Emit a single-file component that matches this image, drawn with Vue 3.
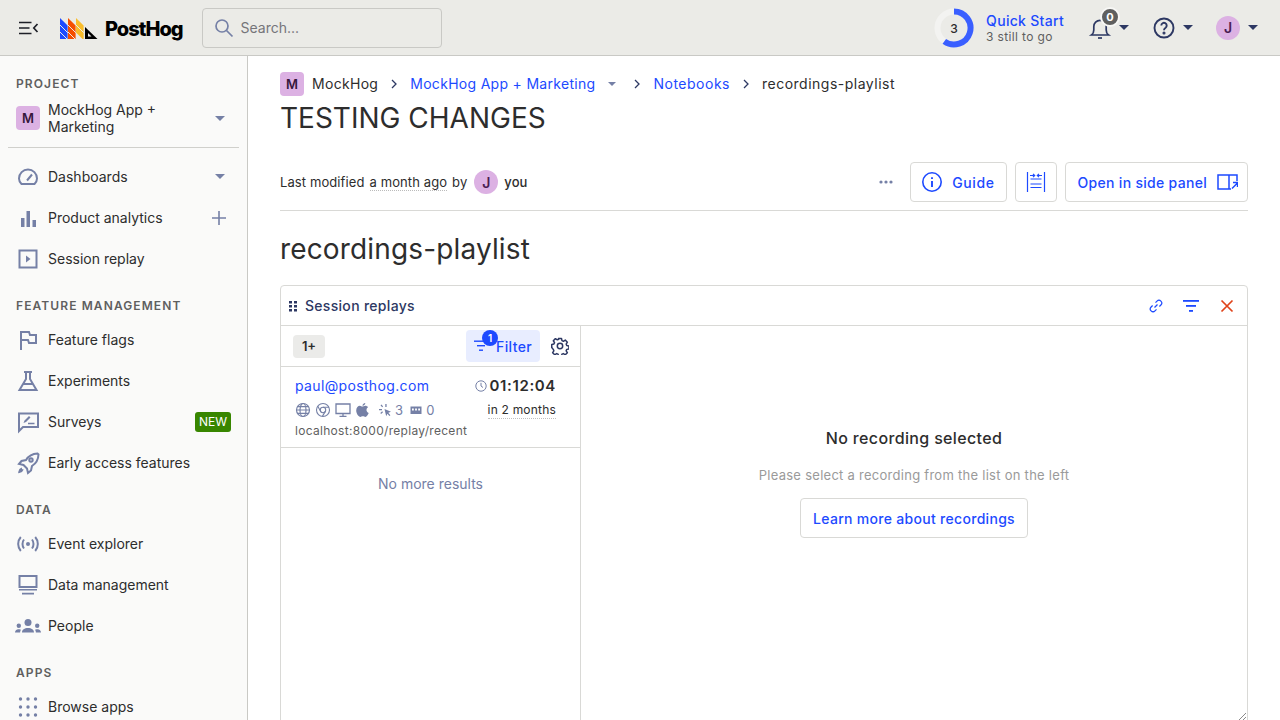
<template>
  <div class="app">
    <header class="topbar">
      <div class="top-left">
        <button class="menu-btn" aria-label="Menu">
          <svg width="20" height="14" viewBox="0 0 20 14" fill="none" stroke="#1d1f27" stroke-width="1.7">
            <path d="M0 1.5h12.5M0 7h10.5M0 12.5h12.5M18.5 3L14.8 7l3.7 4" />
          </svg>
        </button>
        <div class="logo">
          <svg width="38" height="22" viewBox="0 0 38 22">
            <path d="M0 0l7.6 7.6V21H0z" fill="#1d4aff" />
            <path d="M8 0l7.600 7.600V21H8z" fill="#f54e00" />
            <path d="M16 0l7.600 7.600V21h-1L16 14.500z" fill="#f9bd2b" />
            <path d="M25 9l12.500 12H25z" fill="#000" />
            <path d="M28 18.500h3.500L28 15z" fill="#ebebe7" />
            <path d="M0 7l7.800 7.800M0 14l7.200 7.200M8 7l7.800 7.800M8 14l7.200 7.200M16 7l7.800 7.800" stroke="#ebebe7" stroke-width="1" />
          </svg>
          <span class="logo-text">PostHog</span>
        </div>
        <div class="search">
          <svg width="20" height="20" viewBox="0 0 20 20" fill="none" stroke="#7580a6" stroke-width="1.7">
            <circle cx="8" cy="8" r="6" />
            <path d="M12.5 12.5L18.5 18.5" />
          </svg>
          <span>Search...</span>
        </div>
      </div>
      <div class="top-right">
        <div class="quick-start">
          <svg width="40" height="40" viewBox="0 0 40 40" fill="none">
            <circle cx="20" cy="20" r="16.5" stroke="#f3f3f1" stroke-width="6" />
            <path d="M20 3.5A16.5 16.5 0 1 1 10.3 33.35" stroke="#3a5fff" stroke-width="6" />
            <text x="20" y="24.5" text-anchor="middle" class="ring-num">3</text>
          </svg>
          <div class="qs-text">
            <div class="qs-title">Quick Start</div>
            <div class="qs-sub">3 still to go</div>
          </div>
        </div>
        <div class="top-action bell">
          <svg width="24" height="24" viewBox="0 0 24 24" fill="none" stroke="#2d3863" stroke-width="1.7">
            <path d="M3.500 19c1.400-1 2.300-2.600 2.300-5V10.500a6.200 6.200 0 0 1 12.400 0v3.500c0 2.400.9 4 2.300 5z" />
            <path d="M10 22h4" />
          </svg>
          <span class="bell-badge">0</span>
          <span class="caret dark"></span>
        </div>
        <div class="top-action help">
          <svg width="24" height="24" viewBox="0 0 24 24" fill="none" stroke="#2d3863" stroke-width="1.9">
            <circle cx="12" cy="12" r="9.500" />
            <path d="M9.300 9.500a2.700 2.700 0 1 1 4.300 2.200c-1 .7-1.600 1.200-1.600 2.500" />
            <circle cx="12" cy="17" r="0.600" fill="#2d3863" />
          </svg>
          <span class="caret dark"></span>
        </div>
        <div class="top-action user">
          <span class="avatar round">J</span>
          <span class="caret dark"></span>
        </div>
      </div>
    </header>

    <div class="body">
      <aside class="sidebar">
        <div class="section-label first">PROJECT</div>
        <div class="project-row">
          <span class="avatar">M</span>
          <span class="project-name">MockHog App + Marketing</span>
          <span class="caret"></span>
        </div>
        <div class="side-divider"></div>

        <template v-for="group in navGroups" :key="group.label">
          <div v-if="group.label" class="section-label">{{ group.label }}</div>
          <div v-for="item in group.items" :key="item.name" class="nav-item">
            <svg class="nav-icon" width="24" height="24" viewBox="0 0 24 24" v-html="item.icon"></svg>
            <span class="nav-name">{{ item.name }}</span>
            <span v-if="item.side === 'caret'" class="caret"></span>
            <svg v-if="item.side === 'plus'" width="16" height="16" viewBox="0 0 16 16" class="plus" stroke="#7580a6" stroke-width="1.6">
              <path d="M8 1v14M1 8h14" />
            </svg>
            <span v-if="item.side === 'new'" class="new-tag">NEW</span>
          </div>
        </template>
      </aside>

      <main class="main">
        <nav class="crumbs">
          <span class="avatar">M</span>
          <span class="crumb-text wide-a">MockHog</span>
          <svg class="chev" width="8" height="10" viewBox="0 0 8 10" fill="none" stroke="#2d3863" stroke-width="1.300"><path d="M2 1l4 4-4 4" /></svg>
          <a class="link crumb-text wide-b">MockHog App + Marketing</a>
          <span class="caret small"></span>
          <svg class="chev" width="8" height="10" viewBox="0 0 8 10" fill="none" stroke="#2d3863" stroke-width="1.300"><path d="M2 1l4 4-4 4" /></svg>
          <a class="link crumb-text wide-c">Notebooks</a>
          <svg class="chev" width="8" height="10" viewBox="0 0 8 10" fill="none" stroke="#2d3863" stroke-width="1.300"><path d="M2 1l4 4-4 4" /></svg>
          <span class="crumb-text wide-c">recordings-playlist</span>
        </nav>
        <h1 class="page-title">TESTING CHANGES</h1>

        <div class="meta-row">
          <div class="modified">
            Last modified <span class="dotted">a month ago</span> by
            <span class="avatar round">J</span>
            <span class="you">you</span>
          </div>
          <div class="actions">
            <span class="more">
              <svg width="14" height="4" viewBox="0 0 14 4" fill="#7580a6">
                <circle cx="2" cy="2" r="1.600" /><circle cx="7" cy="2" r="1.600" /><circle cx="12" cy="2" r="1.600" />
              </svg>
            </span>
            <button class="btn guide">
              <svg width="22" height="22" viewBox="0 0 22 22" fill="none" stroke="#1d4aff" stroke-width="1.600">
                <circle cx="11" cy="11" r="9.200" />
                <path d="M11 10v6" stroke-width="1.900" /><path d="M11 6.300v1.800" stroke-width="1.900" />
              </svg>
              Guide
            </button>
            <button class="btn icon-only">
              <svg width="20" height="22" viewBox="0 0 20 22" fill="none" stroke="#1d4aff" stroke-width="1.200">
                <path d="M1.500 1v20M18.500 1v20M4.500 8h11M4.500 13h11M4.500 16.500h11M4 4.500h4.500M11.500 4.500H16M7 2.800l1.700 1.700L7 6.200M13 2.800l-1.700 1.700L13 6.200" />
              </svg>
            </button>
            <button class="btn side">
              Open in side panel
              <svg width="21" height="16" viewBox="0 0 21 16" fill="none" stroke="#1d4aff" stroke-width="1.500">
                <path d="M20 7V1H1v14h13M12 1v14" />
                <path d="M15 14.500l5-5M16 8.500h4.500V13" stroke-width="1.500" />
              </svg>
            </button>
          </div>
        </div>

        <h2 class="doc-title">recordings-playlist</h2>

        <section class="card">
          <div class="card-head">
            <svg class="grip" width="8" height="12" viewBox="0 0 8 12" fill="#2d3863">
              <rect x="0" y="1" width="3" height="2.500" /><rect x="5" y="1" width="3" height="2.500" />
              <rect x="0" y="5" width="3" height="2.500" /><rect x="5" y="5" width="3" height="2.500" />
              <rect x="0" y="9" width="3" height="2.500" /><rect x="5" y="9" width="3" height="2.500" />
            </svg>
            <span class="card-title">Session replays</span>
            <div class="card-tools">
              <svg width="14" height="14" viewBox="0 0 14 14" fill="none" stroke="#1d4aff" stroke-width="1.200">
                <path d="M5.500 8.500l3-3" />
                <path d="M6.500 3.600l1.500-1.500a2.500 2.500 0 0 1 3.900 3.900l-1.500 1.500" />
                <path d="M7.500 10.400L6 11.900a2.500 2.500 0 0 1-3.900-3.900l1.500-1.500" />
              </svg>
              <svg width="16" height="12" viewBox="0 0 16 12" fill="#1d4aff">
                <rect x="0" y="0" width="16" height="1.800" /><rect x="3" y="5" width="10" height="1.800" /><rect x="6" y="10" width="4" height="1.800" />
              </svg>
              <svg class="close" width="14" height="14" viewBox="0 0 14 14" fill="none" stroke="#e0431a" stroke-width="1.700">
                <path d="M1.500 1.500l11 11M12.500 1.500l-11 11" />
              </svg>
            </div>
          </div>
          <div class="card-body">
            <div class="list-col">
              <div class="list-tools">
                <span class="count">1+</span>
                <button class="filter">
                  <svg width="13" height="12" viewBox="0 0 13 12" fill="#1d4aff">
                    <rect x="0" y="0.500" width="13" height="1.400" /><rect x="3" y="5" width="8" height="1.400" /><rect x="5" y="9.500" width="4" height="1.400" />
                  </svg>
                  <span class="filter-badge">1</span>
                  <span class="filter-text">Filter</span>
                </button>
                <svg class="gear" width="18" height="18" viewBox="0 0 24 24" fill="none" stroke="#2d3863" stroke-width="2" stroke-linejoin="round">
                  <circle cx="12" cy="12" r="3.600" />
                  <path d="M10 2h4l.6 2.900 1.900.8 2.500-1.600 2.800 2.800-1.600 2.500.8 1.900 2.900.6v4l-2.900.6-.8 1.900 1.600 2.500-2.800 2.800-2.500-1.600-1.900.8-.6 2.900h-4l-.6-2.900-1.900-.8-2.500 1.600-2.800-2.800 1.600-2.500-.8-1.900L1 14v-4l2.900-.6.8-1.900-1.600-2.500 2.800-2.800 2.500 1.600 1.900-.8z" />
                </svg>
              </div>
              <div class="recording">
                <div class="rec-left">
                  <a class="link rec-email">paul@posthog.com</a>
                  <div class="rec-icons">
                    <svg width="16" height="16" viewBox="0 0 16 16" fill="none" stroke="#7580a6" stroke-width="1.200">
                      <circle cx="8" cy="8" r="6.500" /><ellipse cx="8" cy="8" rx="3" ry="6.500" /><path d="M1.500 8h13M2.500 4.700h11M2.500 11.300h11" />
                    </svg>
                    <svg width="16" height="16" viewBox="0 0 16 16" fill="none" stroke="#7580a6" stroke-width="1.100">
                      <circle cx="8" cy="8" r="6.500" /><circle cx="8" cy="8" r="2.700" /><path d="M8 5.300h6M5.700 9.400L2.800 4.300M10.300 9.400L7.400 14.400" />
                    </svg>
                    <svg width="16" height="16" viewBox="0 0 16 16" fill="none" stroke="#7580a6" stroke-width="1.300">
                      <path d="M1 2h14v9.500H1zM8 11.500V14M4.500 14.300h7" />
                    </svg>
                    <svg width="14" height="16" viewBox="0 0 14 16" fill="#7580a6">
                      <path d="M10.300 1c.1 1.300-1.200 2.900-2.800 2.800C7.300 2.500 8.800 1.100 10.300 1zM7.300 4.600c.7 0 1.700-.8 3-.8 1.100 0 2.100.5 2.800 1.500-2.400 1.400-2 4.700.6 5.700-.6 1.500-2 3.900-3.300 3.900-.9 0-1.300-.6-2.500-.6s-1.700.6-2.500.6C3.700 14.900 1.200 11.700 1.200 8.500c0-3 1.900-4.700 3.700-4.700 1 0 1.900.8 2.400.8z" />
                    </svg>
                    <svg class="gap-m" width="14" height="14" viewBox="0 0 14 14" fill="#7580a6">
                      <path d="M6.500 6l6.500 2.800-2.700 1 2.100 2.400-1 .9-2-2.400-1.200 2.500z" />
                      <path d="M1 6h3v1.300H1zM3.500 1.500l1.600 2-1 .8-1.600-2zM7.300 1H8.600v3H7.300zM2.300 10l1.900-1.700.8 1-1.900 1.700z" />
                    </svg>
                    <span class="stat first-stat">3</span>
                    <svg class="gap-l" width="12" height="12" viewBox="0 0 12 12" fill="#7580a6">
                      <path d="M0.500 2.500h11v7.500h-11z" />
                      <path d="M2 4.500h1.800v2H2zM5.100 4.500h1.800v2H5.100zM8.200 4.500H10v2H8.200z" fill="#fff" />
                    </svg>
                    <span class="stat">0</span>
                  </div>
                  <div class="rec-url">localhost:8000/replay/recent</div>
                </div>
                <div class="rec-right">
                  <div class="rec-time">
                    <svg width="12" height="12" viewBox="0 0 12 12" fill="none" stroke="#7580a6" stroke-width="1">
                      <circle cx="6" cy="6" r="5.200" /><path d="M6 2.800V6l2 1.500" />
                    </svg>
                    01:12:04
                  </div>
                  <div class="rec-when">in 2 months</div>
                </div>
              </div>
              <div class="no-more">No more results</div>
            </div>
            <div class="empty-pane">
              <div class="empty-title">No recording selected</div>
              <div class="empty-sub">Please select a recording from the list on the left</div>
              <button class="btn learn">Learn more about recordings</button>
              <svg class="resize" width="7" height="7" viewBox="0 0 7 7" fill="none" stroke="#8a8a8a" stroke-width="1">
                <path d="M0 7l7-7M4 7l3-3" />
              </svg>
            </div>
          </div>
        </section>
      </main>
    </div>
  </div>
</template>

<script setup>
const stroke = 'fill="none" stroke="#7580a6" stroke-width="2"'
const solid = 'fill="#7580a6"'

const navGroups = [
  {
    label: "",
    items: [
      {
        name: "Dashboards",
        side: "caret",
        icon: `<path ${stroke} d="M5.500 19h13c1.600-1.500 2.500-3.400 2.500-5.500A9 9 0 0 0 12 4.500a9 9 0 0 0-9 9c0 2.100.9 4 2.500 5.500z"/><path ${stroke} d="M11 15.500l5-6"/>`,
      },
      {
        name: "Product analytics",
        side: "plus",
        icon: `<path ${solid} d="M5 12h3.500v9H5zM10.500 5h3.500v16h-3.500zM16.500 14H20v7h-3.500z"/>`,
      },
      {
        name: "Session replay",
        icon: `<path ${stroke} d="M3.500 3.500h17v17h-17z"/><path ${solid} d="M10 8.500l4.500 3.500-4.500 3.500z"/>`,
      },
    ],
  },
  {
    label: "FEATURE MANAGEMENT",
    items: [
      { name: "Feature flags", icon: `<path ${stroke} d="M5 22V4h8l1 3h6v8h-7l-1-3H5"/>` },
      { name: "Experiments", icon: `<path ${stroke} d="M8 3h8M10 3v7L3.500 21h17L14 10V3M7 15h10"/>` },
      {
        name: "Surveys",
        side: "new",
        icon: `<path ${stroke} d="M3 3.500h19V17H7l-4 4z"/><path ${solid} d="M7.500 13l1-2.500 4.500-4.500 1.500 1.500-4.500 4.500zM12 12.800h6.500v1.500H12z"/>`,
      },
      {
        name: "Early access features",
        icon: `<path ${stroke} d="M21.500 2.500c-5 .2-9 2.500-11.500 6.500l-4.500 1-2.500 3 4.500 1 3.500 3.500 1 4.500 3-2.500 1-4.500c4-2.500 6.300-6.500 6.500-11.500z"/><circle ${stroke} cx="15" cy="9" r="1.700"/><path ${stroke} d="M6 17.500c-1.500.5-2.500 2-2.700 3.500 1.500-.2 3-1.200 3.500-2.700"/>`,
      },
    ],
  },
  {
    label: "DATA",
    items: [
      {
        name: "Event explorer",
        icon: `<circle ${solid} cx="12" cy="12" r="2"/><path ${stroke} d="M8 7.500c-2 2.500-2 6.500 0 9M16 7.500c2 2.500 2 6.500 0 9M4.800 5c-3.500 4-3.500 10 0 14M19.200 5c3.500 4 3.500 10 0 14"/>`,
      },
      {
        name: "Data management",
        icon: `<path ${stroke} d="M3.500 3h17v11h-17z"/><path ${solid} d="M3 16h18v1.600H3zM6 19.800h12v1.700H6z"/>`,
      },
      {
        name: "People",
        icon: `<path ${solid} d="M-1 18.500c0-2 1.500-3.300 3.300-3.300s2.700.6 2.700.6c-.6.800-.9 1.700-.9 2.700zM25 18.500c0-2-1.500-3.300-3.300-3.300s-2.700.6-2.700.6c.6.800.9 1.700.9 2.700zM6 18.500c0-2.800 2.500-4.500 6-4.500s6 1.700 6 4.500z"/><circle ${solid} cx="12" cy="8.500" r="3.500"/><circle ${solid} cx="2.800" cy="11.800" r="2.200"/><circle ${solid} cx="21.200" cy="11.800" r="2.200"/>`,
      },
    ],
  },
  {
    label: "APPS",
    items: [
      {
        name: "Browse apps",
        icon: `<g ${solid}><circle cx="4.500" cy="4" r="1.700"/><circle cx="12" cy="4" r="1.700"/><circle cx="19.500" cy="4" r="1.700"/><circle cx="4.500" cy="12" r="1.700"/><circle cx="12" cy="12" r="1.700"/><circle cx="19.500" cy="12" r="1.700"/><circle cx="4.500" cy="20" r="1.700"/><circle cx="12" cy="20" r="1.700"/><circle cx="19.500" cy="20" r="1.700"/></g>`,
      },
    ],
  },
]
</script>

<style>
html,
body {
  margin: 0;
  overflow: hidden;
  background: #fff;
}
</style>

<style scoped>
.app {
  width: 1280px;
  height: 720px;
  overflow: hidden;
  display: flex;
  flex-direction: column;
  font-family: Inter, "Liberation Sans", sans-serif;
  color: #2d2d2d;
  font-size: 14px;
}
button {
  font-family: inherit;
  cursor: pointer;
}
svg {
  flex-shrink: 0;
  display: block;
}
.topbar {
  height: 55px;
  flex-shrink: 0;
  display: flex;
  justify-content: space-between;
  align-items: center;
  background: #ebebe7;
  border-bottom: 1px solid #c9c9c5;
}
.top-left {
  display: flex;
  align-items: center;
}
.menu-btn {
  border: 0;
  background: none;
  padding: 0;
  margin-left: 19px;
  width: 20px;
  height: 14px;
}
.logo {
  display: flex;
  align-items: center;
  gap: 7px;
  margin-left: 21px;
  padding-top: 2px;
}
.logo-text {
  font-size: 20px;
  font-weight: 800;
  color: #000;
  letter-spacing: -1px;
  font-family: Inter, sans-serif;
}
.search {
  width: 240px;
  height: 40px;
  box-sizing: border-box;
  margin-left: 19px;
  display: flex;
  align-items: center;
  gap: 7px;
  padding-left: 11px;
  border: 1px solid #c9c9c5;
  border-radius: 4px;
  color: #75757a;
  font-size: 14px;
}
.top-right {
  display: flex;
  align-items: center;
  padding-right: 22px;
}
.quick-start {
  display: flex;
  align-items: center;
  gap: 12px;
}
.ring-num {
  font-size: 12px;
  font-weight: 500;
  fill: #2d2d2d;
  font-family: Inter, sans-serif;
}
.qs-title {
  color: #1d4aff;
  font-size: 14px;
  line-height: 17px;
  font-weight: 500;
  letter-spacing: 0.3px;
}
.qs-sub {
  color: #5f5f5f;
  font-size: 12px;
  line-height: 15px;
  letter-spacing: 0.35px;
}
.top-action {
  position: relative;
  display: flex;
  align-items: center;
}
.bell {
  margin-left: 24px;
  gap: 7px;
}
.bell-badge {
  position: absolute;
  left: 12px;
  top: -9px;
  width: 16px;
  height: 16px;
  border-radius: 50%;
  background: #5f5f5f;
  border: 2px solid #f7f7f5;
  box-sizing: content-box;
  color: #fff;
  font-size: 11px;
  font-weight: 700;
  line-height: 16px;
  text-align: center;
}
.help {
  margin-left: 23px;
  gap: 7px;
}
.user {
  margin-left: 23px;
  gap: 8px;
}
.caret {
  width: 0;
  height: 0;
  border-left: 5.5px solid transparent;
  border-right: 5.5px solid transparent;
  border-top: 5.5px solid #7580a6;
  flex-shrink: 0;
}
.caret.dark {
  border-top-color: #2d3863;
}
.caret.small {
  border-left-width: 4px;
  border-right-width: 4px;
  border-top-width: 4px;
  margin-left: 13px;
  margin-right: 5px;
}
.avatar {
  width: 24px;
  height: 24px;
  flex-shrink: 0;
  display: inline-flex;
  align-items: center;
  justify-content: center;
  background: #dcb1e3;
  color: #35163b;
  border-radius: 4px;
  font-size: 13px;
  font-weight: 600;
}
.avatar.round {
  border-radius: 50%;
  font-size: 14px;
  color: #4a1d52;
}
.body {
  flex: 1;
  display: flex;
  min-height: 0;
}
.sidebar {
  width: 247px;
  flex-shrink: 0;
  background: #fafaf9;
  border-right: 1px solid #c9c9c5;
  overflow: hidden;
}
.section-label {
  font-size: 12px;
  font-weight: 600;
  letter-spacing: 1.1px;
  color: #5f5f5f;
  line-height: 16px;
  padding-left: 16px;
  margin: 19px 0 5px;
  height: 16px;
}
.section-label.first {
  margin-top: 20px;
  margin-bottom: 0;
}
.project-row {
  display: flex;
  align-items: center;
  padding: 3px 22px 3px 16px;
  gap: 8px;
  height: 34px;
  margin-top: 6px;
}
.project-name {
  flex: 1;
  line-height: 17px;
  color: #2d2d2d;
}
.side-divider {
  height: 1px;
  background: #d0d0cc;
  margin: 9px 8px 8px;
}
.nav-item {
  height: 41px;
  display: flex;
  align-items: center;
  padding: 0 22px 0 16px;
  gap: 8px;
  color: #2d2d2d;
}
.nav-icon {
  overflow: visible;
}
.nav-name {
  flex: 1;
  white-space: nowrap;
}
.plus {
  margin-right: -2px;
}
.new-tag {
  background: #388600;
  color: #fff;
  font-size: 12px;
  line-height: 20px;
  height: 20px;
  padding: 0 4px;
  border-radius: 3px;
  margin-right: -6px;
}
.main {
  flex: 1;
  min-width: 0;
  padding: 16px 32px 0;
}
.crumbs {
  display: flex;
  align-items: center;
  height: 24px;
  font-size: 14px;
}
.crumbs .avatar {
  margin-right: 8px;
}
.crumb-text {
  color: #2d2d2d;
  margin-bottom: 2px;
}
.crumb-text.link {
  color: #1d4aff;
}
.wide-a {
  letter-spacing: 0.3px;
}
.wide-b {
  letter-spacing: 0.3px;
}
.wide-c {
  letter-spacing: 0.5px;
}
.chev {
  margin: 0 12px;
}
.link {
  color: #1d4aff;
}
.page-title {
  margin: 5px 0 0;
  font-size: 28px;
  font-weight: 400;
  line-height: 34px;
  color: #2d2d2d;
}
.meta-row {
  margin-top: 27px;
  height: 40px;
  display: flex;
  justify-content: space-between;
  align-items: center;
  padding-bottom: 8px;
  border-bottom: 1px solid #d9d9d6;
}
.modified {
  display: flex;
  align-items: center;
  gap: 5px;
  font-size: 13px;
  color: #2d2d2d;
  letter-spacing: 0.1px;
}
.dotted {
  border-bottom: 1px dotted #bbb;
}
.modified .avatar {
  margin-left: 2px;
  margin-right: 1px;
}
.you {
  font-weight: 500;
}
.actions {
  display: flex;
  align-items: center;
  gap: 8px;
}
.more {
  margin-right: 9px;
}
.btn {
  height: 40px;
  display: flex;
  align-items: center;
  gap: 9px;
  padding: 0 10px;
  background: #fff;
  border: 1px solid #d9d9d6;
  border-radius: 4px;
  color: #1d4aff;
  font-size: 14px;
  font-weight: 500;
  letter-spacing: 0.25px;
}
.btn.guide {
  padding: 0 11px 0 10px;
  letter-spacing: 0.6px;
}
.btn.side {
  gap: 10px;
  padding: 0 9px 0 12px;
  letter-spacing: 0.3px;
}
.doc-title {
  margin: 20px 0 0;
  font-size: 28px;
  font-weight: 400;
  line-height: 36px;
  color: #2d2d2d;
  letter-spacing: 0.15px;
}
.card {
  margin-top: 18px;
  border: 1px solid #d9d9d6;
  border-radius: 4px;
  height: 500px;
}
.card-head {
  height: 39px;
  display: flex;
  align-items: center;
  padding: 0 13px 0 8px;
  border-bottom: 1px solid #d9d9d6;
}
.grip {
  margin-right: 8px;
}
.card-title {
  flex: 1;
  color: #2d3863;
  font-weight: 500;
  font-size: 14px;
  letter-spacing: 0.3px;
}
.card-tools {
  display: flex;
  align-items: center;
  gap: 20px;
}
.card-tools .close {
  margin-left: 1px;
}
.card-body {
  display: flex;
  height: 460px;
}
.list-col {
  width: 299px;
  flex-shrink: 0;
  border-right: 1px solid #d9d9d6;
}
.list-tools {
  height: 40px;
  display: flex;
  align-items: center;
  padding: 0 12px;
  border-bottom: 1px solid #d9d9d6;
}
.count {
  background: #ebebe9;
  border-radius: 4px;
  height: 23px;
  line-height: 23px;
  width: 32px;
  text-align: center;
  font-size: 13px;
  font-weight: 600;
  color: #2d2d2d;
}
.filter {
  position: relative;
  margin-left: auto;
  width: 74px;
  height: 32px;
  background: #e8edff;
  border: 0;
  border-radius: 4px;
  color: #1d4aff;
  display: flex;
  align-items: center;
  padding: 0 8px;
  gap: 9px;
  font-size: 14px;
  font-weight: 500;
}
.filter-text {
  white-space: nowrap;
  letter-spacing: 0.4px;
}
.filter-badge {
  position: absolute;
  left: 16px;
  top: 0;
  width: 16px;
  height: 16px;
  border-radius: 50%;
  background: #1d4aff;
  color: #fff;
  font-size: 10px;
  font-weight: 600;
  line-height: 16px;
  text-align: center;
}
.gear {
  margin-left: 11px;
  margin-right: -1px;
}
.recording {
  height: 80px;
  display: flex;
  justify-content: space-between;
  padding: 0 24px 0 14px;
  border-bottom: 1px solid #d9d9d6;
}
.rec-left {
  padding-top: 8px;
}
.rec-email {
  display: block;
  font-size: 14px;
  line-height: 22px;
  letter-spacing: 0.35px;
}
.rec-icons {
  display: flex;
  align-items: center;
  gap: 4px;
  margin-top: 4px;
  height: 18px;
  color: #7580a6;
  font-size: 13px;
}
.gap-m {
  margin-left: 5px;
}
.gap-l {
  margin-left: 3px;
}
.stat {
  letter-spacing: 0.2px;
}
.first-stat {
  margin-left: -1px;
}
.rec-url {
  font-size: 12px;
  line-height: 16px;
  color: #5f5f5f;
  margin-top: 4px;
  letter-spacing: 0.3px;
}
.rec-right {
  padding-top: 8px;
  display: flex;
  flex-direction: column;
  align-items: flex-end;
}
.rec-time {
  display: flex;
  align-items: center;
  gap: 2px;
  font-size: 15px;
  font-weight: 600;
  line-height: 22px;
  letter-spacing: 0.65px;
}
.rec-when {
  margin-top: 4px;
  font-size: 12px;
  line-height: 17px;
  border-bottom: 1px dotted #c0c0c0;
  letter-spacing: 0.2px;
}
.no-more {
  text-align: center;
  color: #7580a6;
  padding-top: 27px;
  line-height: 18px;
}
.empty-pane {
  position: relative;
  flex: 1;
  min-width: 0;
  display: flex;
  flex-direction: column;
  align-items: center;
  padding-top: 102px;
}
.resize {
  position: absolute;
  right: 1px;
  top: 387px;
}
.empty-title {
  font-size: 16px;
  font-weight: 500;
  line-height: 20px;
  letter-spacing: 0.35px;
}
.empty-sub {
  margin-top: 18px;
  font-size: 13px;
  line-height: 18px;
  color: #9a9a9a;
  letter-spacing: 0.27px;
}
.btn.learn {
  margin-top: 14px;
  padding: 0 12px;
  letter-spacing: 0.3px;
}
</style>
